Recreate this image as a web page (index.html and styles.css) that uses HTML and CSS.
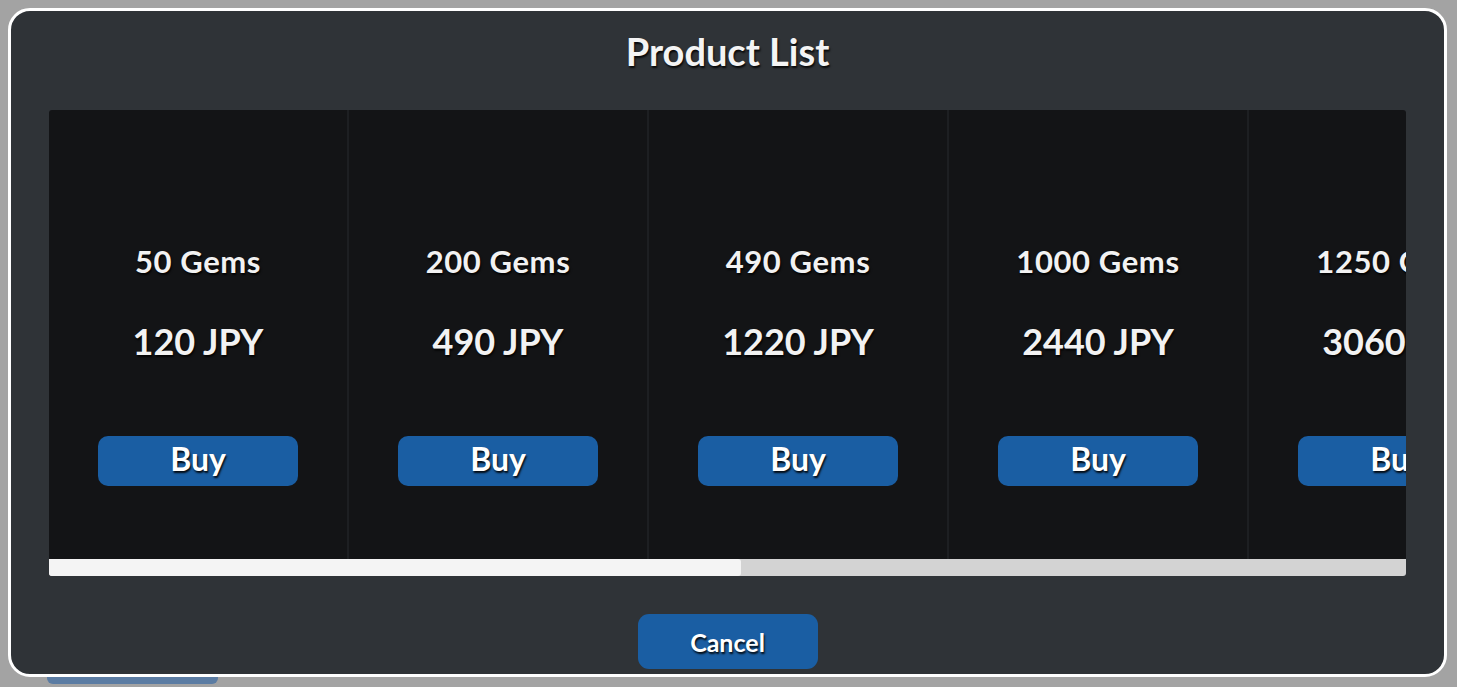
FILE: index.html
```html
<!DOCTYPE html>
<html>
<head>
<meta charset="utf-8">
<link rel="stylesheet" href="styles.css">
</head>
<body>
<div class="behind-btn"></div>
<div class="panel">
  <h1 class="title">Product List</h1>
  <div class="scroller">
    <div class="track">
      <div class="card"><div class="name">50 Gems</div><div class="price">120 JPY</div><button class="buy">Buy</button></div>
      <div class="card"><div class="name">200 Gems</div><div class="price">490 JPY</div><button class="buy">Buy</button></div>
      <div class="card"><div class="name">490 Gems</div><div class="price">1220 JPY</div><button class="buy">Buy</button></div>
      <div class="card"><div class="name">1000 Gems</div><div class="price">2440 JPY</div><button class="buy">Buy</button></div>
      <div class="card"><div class="name">1250 Gems</div><div class="price">3060 JPY</div><button class="buy">Buy</button></div>
      <div class="card"><div class="name">2500 Gems</div><div class="price">6100 JPY</div><button class="buy">Buy</button></div>
    </div>
  </div>
  <div class="scrollbar"><div class="thumb" style="width:692px"></div></div>
  <div class="footer"><button class="cancel">Cancel</button></div>
</div>
</body>
</html>
```
FILE: styles.css
```css
html, body {
  margin: 0;
  padding: 0;
}
body {
  background: #a3a3a3;
  width: 1457px;
  height: 687px;
  overflow: hidden;
  position: relative;
  font-family: "Lato", "Open Sans", sans-serif;
}
.behind-btn {
  position: absolute;
  left: 47px;
  top: 660px;
  width: 171px;
  height: 24px;
  background: #5b7ca3;
  border-radius: 6px;
}
.panel {
  position: relative;
  box-sizing: border-box;
  margin: 8px 0 0 8px;
  width: 1439px;
  height: 669px;
  border: 3px solid #ffffff;
  border-radius: 22px;
  background: #2f3337;
  padding: 0 38px;
  display: flex;
  flex-direction: column;
}
.title {
  margin: 0;
  height: 99px;
  box-sizing: border-box;
  padding-top: 18px;
  line-height: 44px;
  font-size: 38px;
  font-weight: 700;
  color: #f4f4f4;
  text-align: center;
  text-shadow: 1px 2px 2px rgba(0,0,0,0.85);
}
.scroller {
  height: 449px;
  background: #131416;
  border-radius: 3px 3px 0 0;
  overflow: hidden;
}
.track {
  display: flex;
  height: 100%;
}
.card {
  flex: 0 0 298px;
  border-right: 2px solid #1d1f22;
  display: flex;
  flex-direction: column;
  align-items: center;
  padding-top: 130px;
  box-sizing: content-box;
}
.name {
  font-size: 31px;
  line-height: 42px;
  font-weight: 700;
  letter-spacing: 0.6px;
  color: #f2f2f2;
  white-space: nowrap;
  text-shadow: 1px 2px 2px rgba(0,0,0,0.85);
}
.price {
  margin-top: 34px;
  font-size: 36px;
  line-height: 50px;
  font-weight: 700;
  color: #f2f2f2;
  white-space: nowrap;
  text-shadow: 1px 2px 2px rgba(0,0,0,0.85);
}
.buy {
  margin-top: 70px;
  width: 200px;
  height: 50px;
  border: none;
  border-radius: 10px;
  background: #1a5ea3;
  color: #ffffff;
  font-family: inherit;
  font-size: 32px;
  font-weight: 700;
  line-height: 46px;
  padding: 0 0 4px;
  text-shadow: 1px 2px 2px rgba(0,0,0,0.9);
}
.scrollbar {
  height: 17px;
  background: #d3d3d3;
  border-radius: 0 0 3px 3px;
  display: flex;
}
.thumb {
  height: 100%;
  background: #f4f4f4;
  border-radius: 0 3px 3px 3px;
}
.footer {
  display: flex;
  justify-content: center;
  padding-top: 38px;
}
.cancel {
  width: 180px;
  height: 55px;
  border: none;
  border-radius: 11px;
  background: #1a5ea3;
  color: #ffffff;
  font-family: inherit;
  font-size: 25px;
  font-weight: 700;
  padding: 0;
  text-shadow: 1px 2px 2px rgba(0,0,0,0.9);
}
```
